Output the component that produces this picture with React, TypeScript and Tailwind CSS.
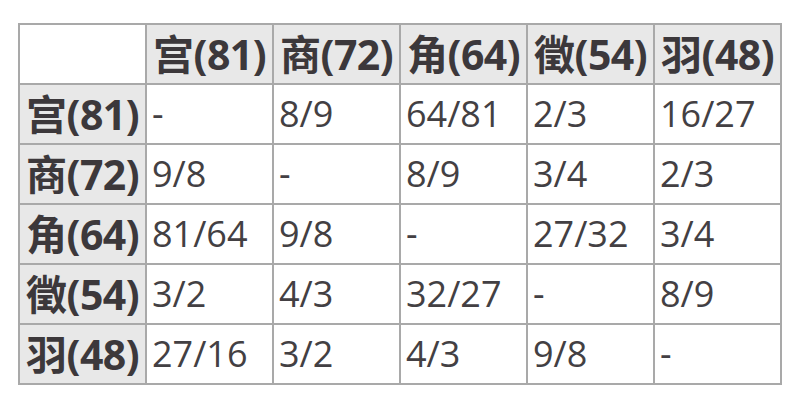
const NOTES = ["宫(81)", "商(72)", "角(64)", "徵(54)", "羽(48)"]

const RATIOS: string[][] = [
  ["-", "8/9", "64/81", "2/3", "16/27"],
  ["9/8", "-", "8/9", "3/4", "2/3"],
  ["81/64", "9/8", "-", "27/32", "3/4"],
  ["3/2", "4/3", "32/27", "-", "8/9"],
  ["27/16", "3/2", "4/3", "9/8", "-"],
]

export default function App() {
  return (
    <div
      className="w-[797px] h-[401px] bg-white pl-[18px] pt-[23px]"
      style={{ fontFamily: '"Open Sans", "Noto Sans CJK SC", sans-serif' }}
    >
      <table className="table-fixed border-collapse w-[763px]">
        <colgroup>
          {[0, 1, 2, 3, 4, 5].map((i) => (
            <col key={i} className="w-[127px]" />
          ))}
        </colgroup>
        <thead>
          <tr className="h-[60px]">
            <th className="border-2 border-[#a9a9a9] bg-white" />
            {NOTES.map((n) => (
              <th
                key={n}
                className="border-2 border-[#a9a9a9] bg-[#e8e8e8] px-[6px] text-left text-[41px] font-bold leading-none tracking-[-0.5px] text-[#3c383b] whitespace-nowrap"
              >
                {n}
              </th>
            ))}
          </tr>
        </thead>
        <tbody>
          {RATIOS.map((row, r) => (
            <tr key={r} className="h-[60px]">
              <th className="border-2 border-[#a9a9a9] bg-[#e8e8e8] px-[6px] text-left text-[41px] font-bold leading-none tracking-[-0.5px] text-[#3c383b] whitespace-nowrap">
                {NOTES[r]}
              </th>
              {row.map((v, c) => (
                <td
                  key={c}
                  className="border-2 border-[#a9a9a9] bg-white px-[5px] text-left text-[36px] leading-none text-[#434043]"
                >
                  {v}
                </td>
              ))}
            </tr>
          ))}
        </tbody>
      </table>
    </div>
  )
}
